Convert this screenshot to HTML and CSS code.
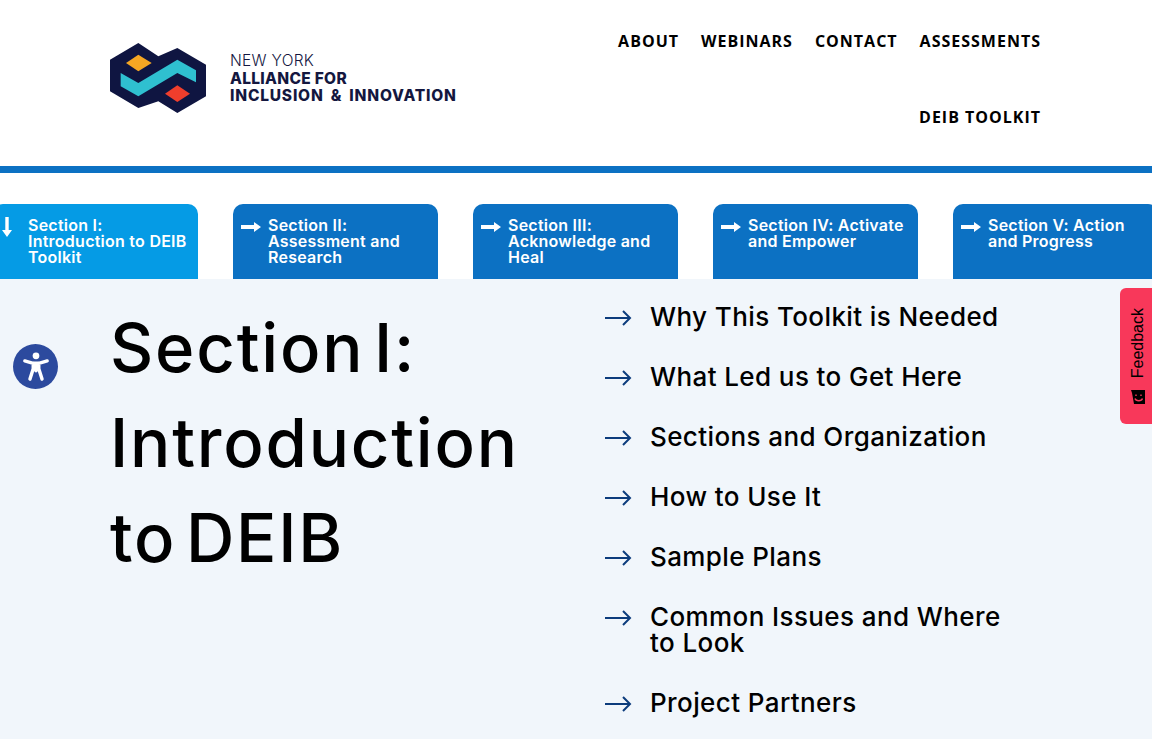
FILE: index.html
```html
<!DOCTYPE html>
<html>
  <head>
    <title>Section I: Introduction to DEIB</title>
    <link rel="stylesheet" href="styles.css">
  </head>
  <body>
    <header class="site-header">
      <a class="brand" href="#">
        <svg class="brand-mark" viewBox="0 0 288 210" width="96" height="70">
          <polygon fill="#0f1541" points="0,50 85,0 145,40 202,15 288,65 288,160 202,210 145,175 85,195 0,145" />
          <polygon fill="#2fc0d0" points="32,90 85,120 202,50 258,82 258,118 202,90 85,160 32,130" />
          <polygon fill="#f5a623" points="48,60 85,35 125,60 85,85" />
          <polygon fill="#f03e2c" points="165,152 202,127 240,152 202,177" />
        </svg>
        <span class="brand-text">
          <span class="brand-state">NEW YORK</span>
          <span class="brand-name">ALLIANCE FOR</span>
          <span class="brand-name brand-name-wide">INCLUSION &amp; INNOVATION</span>
        </span>
      </a>
      <nav class="main-nav">
        <a href="#">About</a>
        <a href="#">Webinars</a>
        <a href="#">Contact</a>
        <a href="#">Assessments</a>
        <a href="#">DEIB Toolkit</a>
      </nav>
    </header>

    <div class="tabs">
      <a class="tab active" href="#">
        <svg class="tab-icon-down" viewBox="0 0 10 20" width="10" height="20">
          <path d="M3.300 0h3.400v13H10l-5 7-5-7h3.300z" fill="#fff" />
        </svg>
        <span>Section I: Introduction to DEIB Toolkit</span>
      </a>
      <a class="tab" href="#">
        <svg class="tab-icon" viewBox="0 0 20 12" width="20" height="12">
          <path d="M0 4h13V1l7 5-7 5V8H0z" fill="#fff" />
        </svg>
        <span>Section II: Assessment and Research</span>
      </a>
      <a class="tab" href="#">
        <svg class="tab-icon" viewBox="0 0 20 12" width="20" height="12">
          <path d="M0 4h13V1l7 5-7 5V8H0z" fill="#fff" />
        </svg>
        <span>Section III: Acknowledge and Heal</span>
      </a>
      <a class="tab" href="#">
        <svg class="tab-icon" viewBox="0 0 20 12" width="20" height="12">
          <path d="M0 4h13V1l7 5-7 5V8H0z" fill="#fff" />
        </svg>
        <span>Section IV: Activate and Empower</span>
      </a>
      <a class="tab" href="#">
        <svg class="tab-icon" viewBox="0 0 20 12" width="20" height="12">
          <path d="M0 4h13V1l7 5-7 5V8H0z" fill="#fff" />
        </svg>
        <span>Section V: Action and Progress</span>
      </a>
    </div>

    <main class="section-intro">
      <h1>Section I: Introduction to DEIB</h1>
      <ul class="section-links">
        <li><svg viewBox="0 0 27 16" width="27" height="16"><path d="M0 8h25M18 1l7 7-7 7" /></svg><a href="#">Why This Toolkit is Needed</a></li>
        <li><svg viewBox="0 0 27 16" width="27" height="16"><path d="M0 8h25M18 1l7 7-7 7" /></svg><a href="#">What Led us to Get Here</a></li>
        <li><svg viewBox="0 0 27 16" width="27" height="16"><path d="M0 8h25M18 1l7 7-7 7" /></svg><a href="#">Sections and Organization</a></li>
        <li><svg viewBox="0 0 27 16" width="27" height="16"><path d="M0 8h25M18 1l7 7-7 7" /></svg><a href="#">How to Use It</a></li>
        <li><svg viewBox="0 0 27 16" width="27" height="16"><path d="M0 8h25M18 1l7 7-7 7" /></svg><a href="#">Sample Plans</a></li>
        <li><svg viewBox="0 0 27 16" width="27" height="16"><path d="M0 8h25M18 1l7 7-7 7" /></svg><a href="#">Common Issues and Where to Look</a></li>
        <li><svg viewBox="0 0 27 16" width="27" height="16"><path d="M0 8h25M18 1l7 7-7 7" /></svg><a href="#">Project Partners</a></li>
      </ul>
    </main>

    <button class="a11y-btn" aria-label="Accessibility">
      <svg viewBox="0 0 30 34" width="28" height="32">
        <circle cx="15" cy="5" r="3.600" fill="#fff" />
        <path d="M3 10.500 L12 13 V19 L8.500 30 M27 10.500 L18 13 V19 L21.500 30 M12 13 H18 M12 19 H18 M15 13 V21" fill="none" stroke="#fff" stroke-width="3.600" stroke-linecap="round" stroke-linejoin="round" />
      </svg>
    </button>

    <a class="feedback" href="#">
      <span>Feedback</span>
      <svg viewBox="0 0 14 14" width="14" height="14">
        <path d="M0 0h14v14H3L1 3z" fill="#000" />
        <path d="M5 4.500v1.500M10 4.500v1.500M4 8.500c1 3 6.500 3 7.500 0" fill="none" stroke="#f8385a" stroke-width="1.400" />
      </svg>
    </a>
  </body>
</html>
```

FILE: styles.css
```css
:root {
  --blue: #0c71c3;
  --sky: #059be5;
  --pale: #f1f6fb;
  --navy: #0c3c7c;
}

* {
  margin: 0;
  padding: 0;
  box-sizing: border-box;
}

html,
body {
  height: 739px;
  overflow: hidden;
}

body {
  background: #fff;
  color: #000;
  font-family: Inter, Arial, sans-serif;
}

a {
  color: inherit;
  text-decoration: none;
}

.site-header {
  height: 173px;
  border-bottom: 7px solid var(--blue);
  display: flex;
  justify-content: space-between;
  padding: 0 111px 0 110px;
}

.brand {
  display: flex;
  align-items: center;
  gap: 24px;
  margin-top: 3px;
  height: 150px;
}

.brand-text {
  display: flex;
  flex-direction: column;
  color: #14173f;
  line-height: 17px;
}

.brand-state {
  font-size: 15.500px;
  font-weight: 300;
  letter-spacing: 0.3px;
  margin-bottom: 1px;
}

.brand-name {
  font-size: 15.500px;
  font-weight: 800;
  letter-spacing: 0.3px;
}

.brand-name-wide {
  letter-spacing: 0.8px;
  word-spacing: 3px;
}

.main-nav {
  width: 440px;
  display: flex;
  flex-wrap: wrap;
  align-content: flex-start;
  justify-content: flex-end;
  column-gap: 22px;
  font-family: "Open Sans", Arial, sans-serif;
  font-size: 16px;
  font-weight: 700;
  letter-spacing: 1px;
  text-transform: uppercase;
}

.main-nav a {
  height: 76px;
  padding-top: 30px;
  line-height: 22px;
}

.tabs {
  display: flex;
  gap: 35px;
  margin: 31px 0 0 -7px;
  width: 1200px;
  height: 75px;
}

.tab {
  flex: 0 0 205px;
  display: flex;
  gap: 7px;
  padding: 13px 10px 0 8px;
  border-radius: 10px 10px 0 0;
  background: var(--blue);
  color: #fff;
  font-size: 16px;
  font-weight: 600;
  letter-spacing: 0.25px;
  line-height: 16px;
}

.tab.active {
  background: var(--sky);
  padding-left: 0;
}

.tab-icon {
  flex: none;
  margin-top: 4px;
}

.tab-icon-down {
  flex: none;
  margin: 0 9px;
}

.section-intro {
  background: var(--pale);
  height: 460px;
  padding: 0 110px;
  display: flex;
}

.section-intro h1 {
  width: 495px;
  padding: 21px 50px 0 0;
  font-size: 67px;
  font-weight: 500;
  letter-spacing: 1.8px;
  word-spacing: -10px;
  line-height: 95px;
}

.section-links {
  list-style: none;
  width: 412px;
  padding-top: 25px;
}

.section-links li {
  display: flex;
  gap: 18px;
  margin-bottom: 34px;
  font-size: 26px;
  font-weight: 500;
  letter-spacing: 0.4px;
  line-height: 26px;
}

.section-links svg {
  flex: none;
  margin-top: 6px;
  fill: none;
  stroke: var(--navy);
  stroke-width: 2;
}

.a11y-btn {
  position: fixed;
  left: 13px;
  top: 344px;
  width: 45px;
  height: 45px;
  border: none;
  border-radius: 50%;
  background: #2c4a9e;
  display: flex;
  align-items: center;
  justify-content: center;
}

.feedback {
  position: fixed;
  top: 288px;
  right: 0;
  width: 32px;
  height: 136px;
  border-radius: 6px 0 0 6px;
  background: #f8385a;
  display: flex;
  flex-direction: column;
  align-items: center;
  justify-content: center;
  gap: 11px;
  padding-left: 4px;
  font-family: "Liberation Sans", Arial, sans-serif;
  font-size: 16px;
}

.feedback span {
  writing-mode: vertical-rl;
  transform: rotate(180deg);
}
```
